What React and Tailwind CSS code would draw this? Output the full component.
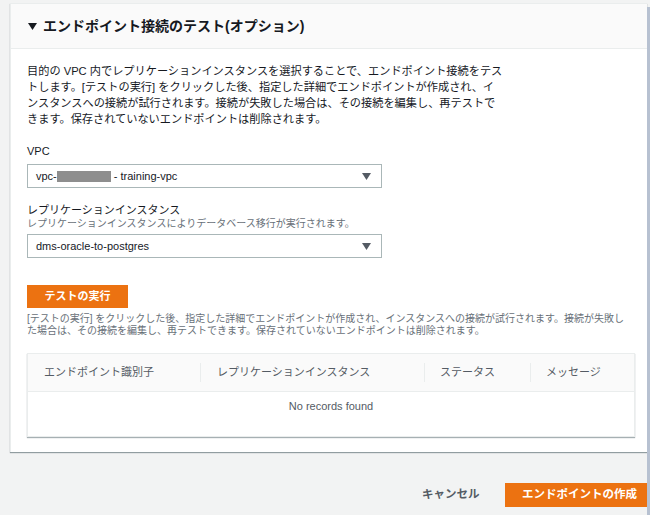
const jp = { fontFamily: '"Liberation Sans", "Noto Sans CJK JP", sans-serif' }

function Select({ children }) {
  return (
    <div className="flex h-[24px] w-[355px] items-center justify-between border border-[#aab7b8] bg-white pl-[8px] pr-[10px] text-[11px] text-[#16191f]">
      <div className="flex items-center">{children}</div>
      <svg width="9" height="7" viewBox="0 0 9 7"><path d="M0 0h9L4.5 7z" fill="#545b64" /></svg>
    </div>
  )
}

export default function App() {
  return (
    <div className="relative h-[515px] w-[650px] overflow-hidden bg-[#f2f3f3] pl-[10px] pt-[3px]" style={jp}>
      <div className="w-[637px] border-l border-t border-[#eaeded] bg-white shadow-[0_1px_1px_0_rgba(0,28,36,0.4)]">
        <div className="flex h-[45px] items-center gap-[6px] border-b border-[#eaeded] bg-[#fafafa] pl-[17px]">
          <svg width="9" height="7" viewBox="0 0 9 7"><path d="M0 0h9L4.5 7z" fill="#16191f" /></svg>
          <h2 className="text-[14px] font-bold text-[#16191f]">エンドポイント接続のテスト(オプション)</h2>
        </div>
        <div className="pb-[15px] pl-[16px] pr-[12px] pt-[14px]">
          <p className="text-[11.2px] leading-[16px] text-[#16191f]">
            目的の VPC 内でレプリケーションインスタンスを選択することで、エンドポイント接続をテス<br />
            トします。[テストの実行] をクリックした後、指定した詳細でエンドポイントが作成され、イ<br />
            ンスタンスへの接続が試行されます。接続が失敗した場合は、その接続を編集し、再テストで<br />
            きます。保存されていないエンドポイントは削除されます。
          </p>

          <div className="mt-[16px] text-[11px] leading-[16px] text-[#16191f]">VPC</div>
          <div className="mt-[5px]">
            <Select>
              <span>vpc-</span>
              <span className="inline-block h-[11px] w-[54px] bg-[#8e8e8e]" />
              <span className="ml-[3px]">- training-vpc</span>
            </Select>
          </div>

          <div className="mt-[15px] text-[11px] leading-[14px] text-[#16191f]">レプリケーションインスタンス</div>
          <div className="text-[10px] leading-[13px] text-[#687078]">レプリケーションインスタンスによりデータベース移行が実行されます。</div>
          <div className="mt-[4px]">
            <Select>dms-oracle-to-postgres</Select>
          </div>

          <button className="mt-[27px] flex h-[23px] w-[101px] items-center justify-center bg-[#ec7211] text-[11px] font-bold text-white">テストの実行</button>
          <p className="mt-[5px] text-[10px] leading-[12px] text-[#687078]">
            [テストの実行] をクリックした後、指定した詳細でエンドポイントが作成され、インスタンスへの接続が試行されます。接続が失敗し<br />
            た場合は、その接続を編集し、再テストできます。保存されていないエンドポイントは削除されます。
          </p>

          <div className="mt-[16px] border border-[#eaeded] bg-white shadow-[0_1px_1px_0_rgba(0,28,36,0.35)]">
            <div className="flex h-[38px] items-center border-b border-[#eaeded] bg-[#fafafa] text-[11px] text-[#545b64]">
              <div className="w-[172px] pl-[16px]">エンドポイント識別子</div>
              <div className="h-[19px] w-px bg-[#eaeded]" />
              <div className="w-[223px] pl-[16px]">レプリケーションインスタンス</div>
              <div className="h-[19px] w-px bg-[#eaeded]" />
              <div className="w-[105px] pl-[15px]">ステータス</div>
              <div className="h-[19px] w-px bg-[#eaeded]" />
              <div className="pl-[15px]">メッセージ</div>
            </div>
            <div className="h-[44px] pt-[6px] text-center text-[11px] text-[#545b64]">No records found</div>
          </div>
        </div>
      </div>

      <div className="mt-[31px] flex items-center">
        <button className="ml-[412px] shrink-0 whitespace-nowrap text-[11.5px] font-bold text-[#545b64]">キャンセル</button>
        <button className="ml-[25px] flex h-[24px] w-[150px] shrink-0 items-center justify-center whitespace-nowrap bg-[#ec7211] text-[11.5px] font-bold text-white">エンドポイントの作成</button>
      </div>

      <div className="absolute right-0 top-[7px] h-[508px] w-[3px] bg-[#b7c1d1]" />
    </div>
  )
}
